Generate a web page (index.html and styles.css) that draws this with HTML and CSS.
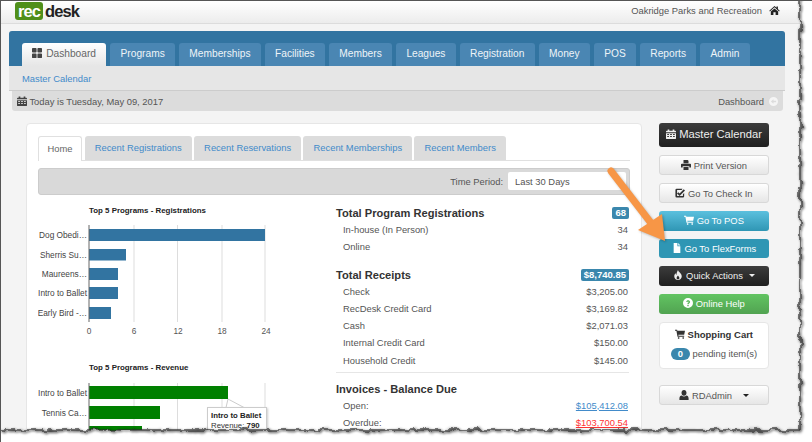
FILE: index.html
```html
<!DOCTYPE html>
<html lang="en">
<head>
  <meta charset="UTF-8" />
  <meta name="viewport" content="width=device-width, initial-scale=1.0" />
  <title>RecDesk Dashboard</title>
  <link rel="stylesheet" href="styles.css">
</head>
<body>
  <svg class="sprite" aria-hidden="true">
    <symbol id="i-grid" viewBox="0 0 12 12"><path d="M0 1q0-1 1-1h3.500q1 0 1 1v3.500q0 1-1 1H1q-1 0-1-1zM6.500 1q0-1 1-1H11q1 0 1 1v3.500q0 1-1 1H7.500q-1 0-1-1zM0 7.500q0-1 1-1h3.500q1 0 1 1V11q0 1-1 1H1q-1 0-1-1zM6.500 7.500q0-1 1-1H11q1 0 1 1V11q0 1-1 1H7.500q-1 0-1-1z"/></symbol>
    <symbol id="i-cal" viewBox="0 0 12 12"><path d="M0 3q0-1 1-1h1V.5h2V2h4V.5h2V2h1q1 0 1 1v1H0zM0 5h12v6q0 1-1 1H1q-1 0-1-1zm1.500 1v1.200h2V6zm3.500 0v1.200h2V6zm3.500 0v1.200h2V6zM1.500 8.500v1.200h2V8.500zm3.500 0v1.200h2V8.500zm3.500 0v1.200h2V8.500z" fill-rule="evenodd"/></symbol>
    <symbol id="i-home" viewBox="0 0 12 12"><path d="M6 1 .3 6.200l.7.800L6 2.500 11 7l.7-.8-2-1.800V1.500H8.200v1.500zM2 7.200 6 3.700l4 3.500V11H7.200V8H4.800v3H2z"/></symbol>
    <symbol id="i-print" viewBox="0 0 12 12"><path d="M3 0h5l1 1v3H3zM1 4.500h10q1 0 1 1V9h-2V7.500H2V9H0V5.500q0-1 1-1zM3 8.500h6V12H3z"/></symbol>
    <symbol id="i-check" viewBox="0 0 12 12"><path d="M2 1h7l-1 1.500H2.500v7h7V7.500L11 6v4q0 1.500-1.500 1.500h-7.500Q.5 11.500.5 10V2.500Q.5 1 2 1zM4 5l1.500 1.500L10.500 1.500 12 3 5.500 9.500 2.500 6.500z"/></symbol>
    <symbol id="i-cart" viewBox="0 0 12 12"><path d="M0 1h2.500l.3 1H12l-1 5H4l.2 1H11v1.200H3L1.700 2.200H0zM3.500 10h1.700v1.700H3.500zM9 10h1.700v1.700H9z"/></symbol>
    <symbol id="i-file" viewBox="0 0 12 12"><path d="M2 0h4.500v4H10v8H2zM7.500 0 10 3H7.500z"/></symbol>
    <symbol id="i-fire" viewBox="0 0 12 12"><path d="M6 0c.5 2.500 4.500 4 4.500 7.500C10.500 10 8.500 12 6 12s-4.500-2-4.500-4.500c0-1.500.8-2.800 1.700-3.500 0 1 .3 1.700 1 2C4 4 5 2 6 0zm0 6.500C5 7.500 4.300 8.500 4.300 9.500c0 1 .8 1.500 1.700 1.500s1.700-.5 1.700-1.500c0-1-1-2-1.700-3z" fill-rule="evenodd"/></symbol>
    <symbol id="i-help" viewBox="0 0 12 12"><path d="M6 0a6 6 0 1 1 0 12A6 6 0 0 1 6 0zM3.800 4.500l1.400.6c.1-.5.4-.8.8-.8s.7.200.7.600c0 .7-1.400.9-1.400 2.300v.4h1.500c0-1 1.700-1.200 1.700-3C8.500 3.400 7.300 2.600 6 2.600c-1.100 0-1.900.7-2.200 1.900zM5.200 8.300v1.500h1.600V8.300z" fill-rule="evenodd"/></symbol>
    <symbol id="i-user" viewBox="0 0 12 12"><path d="M6 0c1.800 0 3 1.400 3 3.300S7.800 7 6 7 3 5.200 3 3.300 4.200 0 6 0zM3.200 6.500C4 7.300 5 7.800 6 7.800s2-.5 2.800-1.300c1.500.2 2.700 1.300 2.700 3.300V12H.5V9.800c0-2 1.200-3.100 2.700-3.300z"/></symbol>
    <symbol id="i-back" viewBox="0 0 12 12"><path d="M6 0a6 6 0 1 1 0 12A6 6 0 0 1 6 0zM2.500 6 6 9V7h3.500V5H6V3z" fill-rule="evenodd"/></symbol>
  </svg>

  <div class="window">
    <header class="topbar">
      <div class="logo"><span class="logo-rec">rec</span><span class="logo-desk">desk</span></div>
      <div class="org">Oakridge Parks and Recreation <svg class="icon home-icon"><use href="#i-home"/></svg></div>
    </header>

    <nav class="nav-panel">
      <ul class="nav-tabs">
        <li class="nav-tab active"><svg class="icon"><use href="#i-grid"/></svg> Dashboard</li>
        <li class="nav-tab">Programs</li>
        <li class="nav-tab">Memberships</li>
        <li class="nav-tab">Facilities</li>
        <li class="nav-tab">Members</li>
        <li class="nav-tab">Leagues</li>
        <li class="nav-tab">Registration</li>
        <li class="nav-tab">Money</li>
        <li class="nav-tab">POS</li>
        <li class="nav-tab">Reports</li>
        <li class="nav-tab">Admin</li>
      </ul>
      <div class="subnav"><a href="#">Master Calendar</a></div>
    </nav>

    <div class="datebar">
      <span><svg class="icon"><use href="#i-cal"/></svg> Today is Tuesday, May 09, 2017</span>
      <span class="crumb">Dashboard <svg class="icon crumb-dot"><use href="#i-back"/></svg></span>
    </div>

    <div class="content">
      <main class="card">
        <ul class="card-tabs">
          <li class="card-tab active">Home</li>
          <li class="card-tab">Recent Registrations</li>
          <li class="card-tab">Recent Reservations</li>
          <li class="card-tab">Recent Memberships</li>
          <li class="card-tab">Recent Members</li>
        </ul>
        <div class="toolbar">
          <span>Time Period:</span>
          <div class="select">Last 30 Days</div>
        </div>

        <div class="columns">
          <section class="charts">
            <svg class="chart" width="298" height="157">
              <text class="chart-title" x="51" y="10">Top 5 Programs - Registrations</text>
              <g class="grid">
                <line x1="96" y1="22" x2="96" y2="119"/>
                <line x1="139.500" y1="22" x2="139.500" y2="119"/>
                <line x1="184" y1="22" x2="184" y2="119"/>
                <line x1="227" y1="22" x2="227" y2="119"/>
              </g>
              <g class="bars-blue">
                <rect x="51" y="26" width="176" height="12"/>
                <rect x="51" y="46" width="37" height="11.500"/>
                <rect x="51" y="65" width="29" height="12"/>
                <rect x="51" y="84" width="29" height="12"/>
                <rect x="51" y="104" width="22" height="12"/>
              </g>
              <line class="axis" x1="51" y1="22" x2="51" y2="119"/>
              <g class="labels">
                <text x="49" y="35">Dog Obedi…</text>
                <text x="49" y="55">Sherris Su…</text>
                <text x="49" y="74">Maureens…</text>
                <text x="49" y="93">Intro to Ballet</text>
                <text x="49" y="113">Early Bird -…</text>
              </g>
              <g class="ticks">
                <text x="51" y="131">0</text>
                <text x="96" y="131">6</text>
                <text x="140" y="131">12</text>
                <text x="184" y="131">18</text>
                <text x="228" y="131">24</text>
              </g>
            </svg>
            <div class="chart-wrap">
              <svg class="chart" width="298" height="80">
                <text class="chart-title" x="51" y="10">Top 5 Programs - Revenue</text>
                <g class="grid">
                  <line x1="96" y1="23" x2="96" y2="80"/>
                  <line x1="139.500" y1="23" x2="139.500" y2="80"/>
                  <line x1="184" y1="23" x2="184" y2="80"/>
                  <line x1="227" y1="23" x2="227" y2="80"/>
                </g>
                <g class="bars-green">
                  <rect x="51" y="26" width="139" height="13"/>
                  <rect x="51" y="46" width="71" height="13"/>
                  <rect x="51" y="66" width="53" height="13"/>
                </g>
                <line class="axis" x1="51" y1="23" x2="51" y2="80"/>
                <g class="labels">
                  <text x="49" y="36">Intro to Ballet</text>
                  <text x="49" y="56">Tennis Ca…</text>
                </g>
                <path class="tip-tail" d="M190 39 L206 47.500 L188 47.500Z"/>
              </svg>
              <div class="tooltip"><b>Intro to Ballet</b><br>Revenue: <b>790</b></div>
            </div>
          </section>

          <section class="stats">
            <div class="stat-head"><span>Total Program Registrations</span><span class="badge">68</span></div>
            <div class="stat-row"><span>In-house (In Person)</span><span>34</span></div>
            <div class="stat-row"><span>Online</span><span>34</span></div>

            <div class="stat-head spaced"><span>Total Receipts</span><span class="badge">$8,740.85</span></div>
            <div class="stat-row"><span>Check</span><span>$3,205.00</span></div>
            <div class="stat-row"><span>RecDesk Credit Card</span><span>$3,169.82</span></div>
            <div class="stat-row"><span>Cash</span><span>$2,071.03</span></div>
            <div class="stat-row"><span>Internal Credit Card</span><span>$150.00</span></div>
            <div class="stat-row"><span>Household Credit</span><span>$145.00</span></div>
            <hr class="rule">

            <div class="stat-head tight"><span>Invoices - Balance Due</span></div>
            <div class="stat-row"><span>Open:</span><a href="#">$105,412.08</a></div>
            <div class="stat-row"><span>Overdue:</span><a href="#" class="overdue">$103,700.54</a></div>
          </section>
        </div>
      </main>

      <aside class="sidebar">
        <a class="btn btn-dark btn-large"><svg class="icon"><use href="#i-cal"/></svg> Master Calendar</a>
        <a class="btn btn-light"><svg class="icon"><use href="#i-print"/></svg> Print Version</a>
        <a class="btn btn-light"><svg class="icon"><use href="#i-check"/></svg> Go To Check In</a>
        <a class="btn btn-info"><svg class="icon"><use href="#i-cart"/></svg> Go To POS</a>
        <a class="btn btn-teal"><svg class="icon"><use href="#i-file"/></svg> Go To FlexForms</a>
        <a class="btn btn-dark"><svg class="icon"><use href="#i-fire"/></svg> Quick Actions <i class="caret"></i></a>
        <a class="btn btn-green"><svg class="icon"><use href="#i-help"/></svg> Online Help</a>
        <div class="cart">
          <div class="cart-title"><svg class="icon"><use href="#i-cart"/></svg> Shopping Cart</div>
          <div class="cart-count"><span class="pill">0</span> pending item(s)</div>
        </div>
        <a class="btn btn-light btn-user"><svg class="icon"><use href="#i-user"/></svg> RDAdmin <i class="caret caret-gap"></i></a>
      </aside>
    </div>

    <!-- callout drawn on top of the screenshot -->
    <svg class="arrow" width="90" height="90" viewBox="0 0 90 90">
      <path d="M6 6 L46 58" fill="none" stroke="#f79646" stroke-width="7" stroke-linecap="round"/>
      <path d="M60 76 L33 65 L57 49Z" fill="#f79646"/>
    </svg>

    <!-- torn edge along right and bottom -->
    <svg class="torn" width="812" height="442" viewBox="0 0 812 442">
      <defs>
        <filter id="rough" x="-5%" y="-5%" width="110%" height="110%">
          <feTurbulence type="fractalNoise" baseFrequency="0.1" numOctaves="3" seed="7"/>
          <feDisplacementMap in="SourceGraphic" scale="7" xChannelSelector="R" yChannelSelector="G"/>
        </filter>
        <filter id="rough-shadow" x="-5%" y="-5%" width="110%" height="110%">
          <feTurbulence type="fractalNoise" baseFrequency="0.1" numOctaves="3" seed="7"/>
          <feDisplacementMap in="SourceGraphic" scale="7" xChannelSelector="R" yChannelSelector="G"/>
          <feOffset dx="1" dy="1"/>
          <feGaussianBlur stdDeviation="1.200"/>
        </filter>
      </defs>
      <path d="M-60-60H900V520H-60ZM-20-20H800V430H-20Z" fill="#fff" fill-rule="evenodd" filter="url(#rough)"/>
      <rect x="-20" y="-20" width="820" height="450" fill="none" stroke="#000" stroke-opacity=".55" stroke-width="2.500" filter="url(#rough-shadow)"/>
      <rect x="-20" y="-20" width="820" height="450" fill="none" stroke="#333" stroke-width="1.200" filter="url(#rough)"/>
    </svg>
  </div>
</body>
</html>
```

FILE: styles.css
```css
html, body {
  margin: 0;
  padding: 0;
  background: #fff;
}
body {
  font-family: "Liberation Sans", Arial, sans-serif;
  font-size: 9.400px;
  color: #555;
}
ul {
  list-style: none;
  margin: 0;
  padding: 0;
}
a {
  color: #428bca;
  text-decoration: none;
}
.sprite {
  display: none;
}
.icon {
  width: 10px;
  height: 10px;
  fill: currentColor;
  vertical-align: -1px;
}

.window {
  position: relative;
  box-sizing: border-box;
  width: 812px;
  height: 442px;
  overflow: hidden;
  background: #f4f4f4;
  border-top: 1px solid #555;
  border-left: 1px solid #555;
}

/* top bar */
.topbar {
  display: flex;
  justify-content: space-between;
  align-items: flex-start;
  height: 22px;
  padding: 0 32px 0 14px;
  background: linear-gradient(#fff, #ececec);
  border-bottom: 1px solid #dcdcdc;
}
.logo {
  display: flex;
  align-items: center;
  margin-top: 1px;
  font-size: 16.500px;
  font-weight: bold;
  letter-spacing: -.9px;
  line-height: 18px;
}
.logo-rec {
  padding: 0 3px;
  border-radius: 3px;
  background: #4f8f1a;
  color: #fff;
}
.logo-desk {
  margin-left: 2px;
  color: #222;
}
.org {
  display: flex;
  align-items: center;
  gap: 7px;
  height: 18px;
  color: #555;
}
.home-icon {
  color: #222;
  width: 11px;
  height: 11px;
}

/* main nav */
.nav-panel {
  margin: 7px 27px 0 8px;
  border-radius: 3px 3px 0 0;
  overflow: hidden;
  background: #e6e6e6;
}
.nav-tabs {
  display: flex;
  gap: 4px;
  height: 23px;
  padding: 12px 0 0 13px;
  background: #3274a1;
  font-size: 10.200px;
}
.nav-tab {
  box-sizing: border-box;
  height: 23px;
  padding: 0 10.300px;
  border-radius: 3px 3px 0 0;
  background: #4a86b3;
  color: #eef4f8;
  line-height: 21px;
}
.nav-tab.active {
  background: linear-gradient(#fff, #e6e6e6);
  color: #666;
}
.nav-tab.active .icon {
  color: #444;
  margin-right: 1px;
}
.subnav {
  height: 25px;
  padding-left: 13px;
  line-height: 25px;
  border-bottom: 1px solid #ccc;
  box-sizing: border-box;
}
.datebar {
  display: flex;
  justify-content: space-between;
  align-items: center;
  height: 20px;
  margin: 0 29px 0 11px;
  padding: 0 5px;
  border-radius: 0 0 3px 3px;
  background: #dcdcdc;
}
.datebar .icon {
  color: #444;
}
.crumb {
  display: flex;
  align-items: center;
  gap: 5px;
}
.datebar .crumb-dot {
  width: 9px;
  height: 9px;
  color: #f5f5f5;
}

/* content */
.content {
  display: flex;
  align-items: flex-start;
  gap: 17px;
  padding: 12px 0 0 25px;
}
.card {
  box-sizing: border-box;
  width: 616px;
  height: 340px;
  padding: 12px 11px 0;
  background: #fff;
  border: 1px solid #e6e6e6;
  border-radius: 4px;
}
.card-tabs {
  display: flex;
  gap: 2px;
  height: 24px;
  border-bottom: 1px solid #e0e0e0;
}
.card-tab {
  height: 24px;
  padding: 0 10.200px;
  border-radius: 3px 3px 0 0;
  background: #dcdcdc;
  color: #428bca;
  line-height: 24px;
}
.card-tab.active {
  height: 25px;
  padding: 0 8.500px;
  margin-right: .5px;
  box-sizing: border-box;
  background: #fff;
  border: 1px solid #e0e0e0;
  border-bottom: 0;
  color: #666;
  line-height: 23px;
}
.toolbar {
  display: flex;
  justify-content: flex-end;
  align-items: center;
  gap: 5px;
  box-sizing: border-box;
  height: 27px;
  margin-top: 7px;
  padding: 0 3px 1px 0;
  background: #d9d9d9;
  border: 1px solid #ccc;
  border-radius: 3px;
}
.select {
  box-sizing: border-box;
  width: 118px;
  height: 18px;
  padding-left: 7px;
  background: #fff;
  border-radius: 2px;
  line-height: 19px;
}
.columns {
  display: flex;
  margin-top: 9px;
}
.charts {
  flex: none;
  width: 298px;
  margin-top: -1px;
}
.chart {
  display: block;
}
.chart-wrap {
  position: relative;
}
.chart-title {
  font-size: 7.900px;
  font-weight: bold;
  fill: #222;
}
.grid line {
  stroke: #ddd;
  stroke-width: 1;
}
.axis {
  stroke: #666;
  stroke-width: 1;
}
.bars-blue rect {
  fill: #3274a1;
}
.bars-green rect {
  fill: #008000;
}
.labels text {
  font-size: 8.300px;
  fill: #444;
  text-anchor: end;
}
.ticks text {
  font-size: 8.300px;
  fill: #555;
  text-anchor: middle;
}
.tip-tail {
  fill: #fff;
  stroke: #ccc;
}
.tooltip {
  position: absolute;
  left: 169px;
  top: 47px;
  width: 52px;
  height: 40px;
  padding: 3px 3px;
  background: #fff;
  border: 1px solid #ccc;
  box-shadow: 1px 1px 2px rgba(0, 0, 0, .2);
  color: #333;
  font-size: 7.800px;
  line-height: 10px;
  white-space: nowrap;
}
.tooltip b {
  color: #222;
}

/* totals */
.stats {
  flex: none;
  width: 293px;
}
.stat-head {
  display: flex;
  justify-content: space-between;
  align-items: center;
  height: 17px;
  color: #333;
  font-size: 11.100px;
  font-weight: bold;
}
.stat-head.spaced {
  height: 16px;
  margin-top: 12px;
}
.stat-head.tight {
  height: 16px;
}
.badge {
  padding: 0 3px;
  border-radius: 2px;
  background: #3a87ad;
  color: #fff;
  font-size: 9.500px;
  line-height: 12px;
}
.stat-row {
  display: flex;
  justify-content: space-between;
  height: 17.100px;
  padding: 0 1px 0 7px;
  line-height: 17px;
}
.stat-row a {
  text-decoration: underline;
}
.stat-row .overdue {
  color: #f33;
}
.rule {
  height: 1px;
  margin: 3px 0 8px;
  border: 0;
  background: #e6e6e6;
}

/* sidebar */
.sidebar {
  display: flex;
  flex-direction: column;
  gap: 8px;
  width: 110px;
}
.btn {
  box-sizing: border-box;
  display: block;
  height: 20px;
  border-radius: 3px;
  font-size: 9.400px;
  line-height: 19px;
  text-align: center;
}
.btn-large {
  height: 24px;
  font-size: 11.200px;
  line-height: 23px;
}
.btn-dark {
  background: linear-gradient(#3c3c3c, #1f1f1f);
  color: #eee;
}
.btn-light {
  background: linear-gradient(#fff, #e6e6e6);
  border: 1px solid #d8d8d8;
  color: #555;
}
.btn-light .icon {
  color: #333;
}
.btn-info {
  background: linear-gradient(#5bc0de, #2f96b4);
  color: #fff;
}
.btn-teal {
  height: 19px;
  background: #2f96b4;
  color: #fff;
}
.btn-green {
  background: linear-gradient(#62c462, #51a351);
  color: #fff;
}
.caret {
  display: inline-block;
  margin-left: 3px;
  vertical-align: 2px;
  border-top: 3px solid currentColor;
  border-left: 3px solid transparent;
  border-right: 3px solid transparent;
}
.caret-gap {
  margin-left: 8px;
  color: #222;
}
.cart {
  box-sizing: border-box;
  height: 47px;
  padding-top: 5px;
  background: #fff;
  border: 1px solid #e6e6e6;
  border-radius: 4px;
  text-align: center;
}
.cart-title {
  color: #333;
  font-size: 9.500px;
  font-weight: bold;
  line-height: 14px;
}
.cart-count {
  margin-top: 6px;
  font-size: 9.400px;
}
.pill {
  display: inline-block;
  width: 19px;
  border-radius: 7px;
  background: #3a87ad;
  color: #fff;
  font-weight: bold;
  line-height: 12px;
}
.btn-user {
  margin-top: 8px;
}

/* overlays */
.arrow {
  position: absolute;
  left: 604px;
  top: 164px;
  filter: drop-shadow(1px 1px 1px rgba(0, 0, 0, .25));
}
.torn {
  position: absolute;
  left: -1px;
  top: -1px;
  pointer-events: none;
}
```
